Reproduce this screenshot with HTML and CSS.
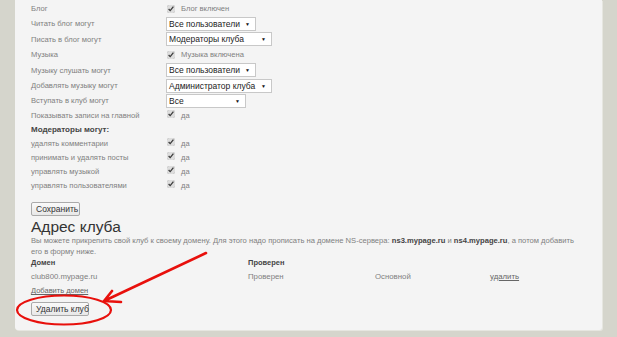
FILE: index.html
```html
<!DOCTYPE html>
<html>
<head>
    <title>Настройки клуба</title>
    <link rel="stylesheet" href="styles.css">
</head>
<body>
    <div class="panel">
        <div class="settings">
            <div class="label">Блог</div>
            <div class="control"><label class="check"><input type="checkbox" checked> Блог включен</label></div>

            <div class="label">Читать блог могут</div>
            <div class="control"><span class="sel w89">Все пользователи</span></div>

            <div class="label">Писать в блог могут</div>
            <div class="control"><span class="sel w106">Модераторы клуба</span></div>

            <div class="label">Музыка</div>
            <div class="control"><label class="check"><input type="checkbox" checked> Музыка включена</label></div>

            <div class="label">Музыку слушать могут</div>
            <div class="control"><span class="sel w89">Все пользователи</span></div>

            <div class="label">Добавлять музыку могут</div>
            <div class="control"><span class="sel w106">Администратор клуба</span></div>

            <div class="label">Вступать в клуб могут</div>
            <div class="control"><span class="sel w80">Все</span></div>

            <div class="label">Показывать записи на главной</div>
            <div class="control"><label class="check low"><input type="checkbox" checked> да</label></div>

            <div class="subhead">Модераторы могут:</div>

            <div class="label">удалять комментарии</div>
            <div class="control"><label class="check low"><input type="checkbox" checked> да</label></div>

            <div class="label">принимать и удалять посты</div>
            <div class="control"><label class="check low"><input type="checkbox" checked> да</label></div>

            <div class="label">управлять музыкой</div>
            <div class="control"><label class="check low"><input type="checkbox" checked> да</label></div>

            <div class="label">управлять пользователями</div>
            <div class="control"><label class="check low"><input type="checkbox" checked> да</label></div>
        </div>

        <button class="btn save">Сохранить</button>

        <h2>Адрес клуба</h2>
        <p class="note">Вы можете прикрепить свой клуб к своему домену. Для этого надо прописать на домене NS-сервера: <b>ns3.mypage.ru</b> и <b>ns4.mypage.ru</b>, а потом добавить его в форму ниже.</p>

        <div class="domains">
            <div class="th">Домен</div>
            <div class="th">Проверен</div>
            <div></div>
            <div></div>

            <div>club800.mypage.ru</div>
            <div>Проверен</div>
            <div>Основной</div>
            <div><a href="#">удалить</a></div>
        </div>
        <a href="#" class="add">Добавить домен</a>

        <button class="btn remove">Удалить клуб</button>
    </div>

    <svg class="mark" width="617" height="337" viewBox="0 0 617 337">
        <ellipse cx="64" cy="310" rx="47" ry="14.5" fill="none" stroke="#e8100c" stroke-width="2.2"/>
        <path d="M206 253 L104 301 M104 301 L112 291 M104 301 L121 302" fill="none" stroke="#e8100c" stroke-width="2.6" stroke-linecap="round"/>
    </svg>
</body>
</html>
```

FILE: styles.css
```css
body {
    margin: 0;
    background-color: #d5d5cc;
    font-family: "Liberation Sans", Arial, sans-serif;
    font-size: 7.6px;
    color: #808080;
    height: 337px;
    overflow: hidden;
    position: relative;
}
.panel {
    margin-left: 15px;
    width: 587px;
    height: 330px;
    box-sizing: border-box;
    padding: 1px 0 0 16px;
    background-color: #f4f4f4;
    border-radius: 0 0 3px 3px;
    box-shadow: 1px 1px 0 #e6e6e0;
}
.settings {
    display: grid;
    grid-template-columns: 135px auto;
    grid-template-rows: 15px 15px 16px 15px 16px 15px 15px 14px 14px 14px 14px 14px 14px;
    align-items: center;
}
.control {
    display: flex;
    align-items: center;
}
.subhead {
    grid-column: 1 / 3;
    font-weight: bold;
    font-size: 8px;
    color: #444;
}
.check {
    display: flex;
    align-items: center;
    gap: 6px;
}
.check.low {
    align-items: flex-end;
}
.check.low input {
    margin-bottom: 2px;
}
input[type=checkbox] {
    width: 8px;
    height: 8px;
    margin: 0 0 0 1px;
    accent-color: #ddd;
}
.sel {
    position: relative;
    display: block;
    box-sizing: border-box;
    height: 14px;
    line-height: 12px;
    font-size: 8.5px;
    color: #222;
    background: #fff;
    border: 1px solid #c8c8c8;
    padding: 0 2px;
}
.sel::after {
    content: "▼";
    position: absolute;
    right: 5px;
    top: 0;
    font-size: 5px;
    color: #111;
}
.w89 { width: 90px; }
.w106 { width: 106px; }
.w80 { width: 80px; }
.btn {
    display: block;
    font-family: inherit;
    font-size: 8.5px;
    color: #333;
    background: linear-gradient(#fafafa, #e8e8e8);
    border: 1px solid #aaa;
    border-radius: 2px;
    height: 14px;
    padding: 0 4px;
    white-space: nowrap;
}
.save {
    margin-top: 10px;
    width: 49px;
}
h2 {
    margin: 3px 0 0;
    font-size: 15.5px;
    font-weight: normal;
    color: #333;
    line-height: 16px;
}
.note {
    margin: 0;
    width: 550px;
    font-size: 7.6px;
    line-height: 11px;
}
.note b {
    color: #444;
}
.domains {
    display: grid;
    grid-template-columns: 217px 127px 115px auto;
    grid-template-rows: 10px 18px;
    align-items: center;
    font-size: 7.8px;
}
.th {
    font-weight: bold;
    font-size: 7.5px;
    color: #444;
}
a {
    color: #666;
}
.add {
    display: inline-block;
    margin-top: 1px;
    font-size: 7.5px;
}
.remove {
    margin-top: 7px;
    width: 58px;
}
.mark {
    position: absolute;
    left: 0;
    top: 0;
    pointer-events: none;
}
```
